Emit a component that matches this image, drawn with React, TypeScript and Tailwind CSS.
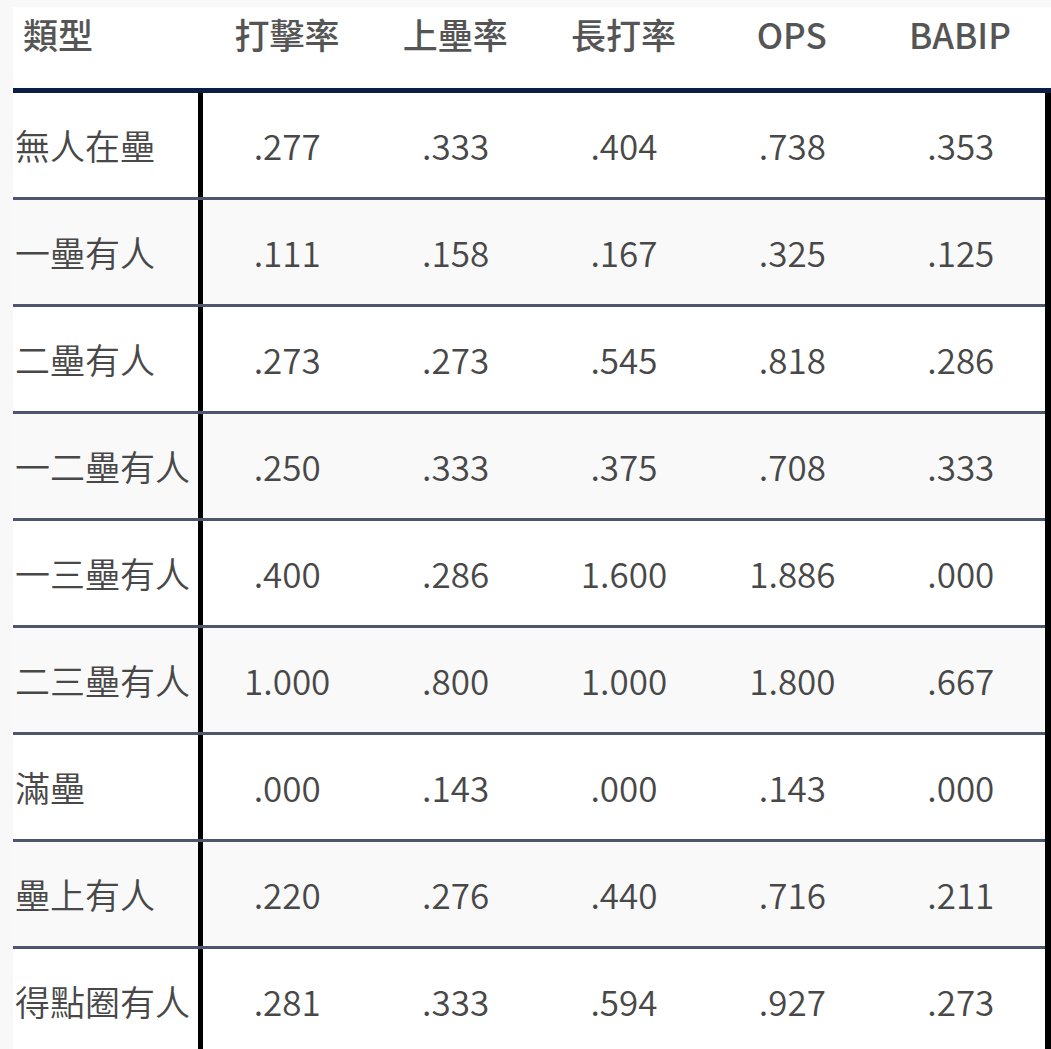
const headers = ['打擊率', '上壘率', '長打率', 'OPS', 'BABIP'];

const rows: [string, string[]][] = [
  ['無人在壘', ['.277', '.333', '.404', '.738', '.353']],
  ['一壘有人', ['.111', '.158', '.167', '.325', '.125']],
  ['二壘有人', ['.273', '.273', '.545', '.818', '.286']],
  ['一二壘有人', ['.250', '.333', '.375', '.708', '.333']],
  ['一三壘有人', ['.400', '.286', '1.600', '1.886', '.000']],
  ['二三壘有人', ['1.000', '.800', '1.000', '1.800', '.667']],
  ['滿壘', ['.000', '.143', '.000', '.143', '.000']],
  ['壘上有人', ['.220', '.276', '.440', '.716', '.211']],
  ['得點圈有人', ['.281', '.333', '.594', '.927', '.273']],
];

const font = "font-['Noto_Sans_CJK_TC','Noto_Sans',sans-serif]";

export default function App() {
  return (
    <div className={`min-h-screen bg-[#f8f8f8] pl-[13px] pt-[7px] ${font}`}>
      <div className="w-[1038px] bg-white">
        {/* Header */}
        <div className="grid h-[81px] grid-cols-[190px_repeat(5,1fr)] items-start pr-[7px] pt-[3px] text-[35px] font-medium leading-[48px] text-[#555]">
          <div className="pl-[10px]">類型</div>
          {headers.map((h) => (
            <div key={h} className="text-center">
              {h}
            </div>
          ))}
        </div>
        <div className="h-[5px] bg-[#0b1d42]" />

        {/* Body */}
        <div className="border-r-[6px] border-black">
          {rows.map(([label, vals], i) => (
            <div
              key={label}
              className={`grid h-[107px] grid-cols-[190px_repeat(5,1fr)] border-b-[3px] border-[#4d566a] text-[35px] font-[350] leading-[48px] text-[#484848] ${
                i % 2 === 1 ? 'bg-[#f9f9f9]' : 'bg-white'
              }`}
            >
              <div className="flex items-center whitespace-nowrap border-r-[5px] border-black pl-[2px]">
                {label}
              </div>
              {vals.map((v, j) => (
                <div key={j} className="flex items-center justify-center">
                  {v}
                </div>
              ))}
            </div>
          ))}
        </div>
      </div>
    </div>
  );
}
